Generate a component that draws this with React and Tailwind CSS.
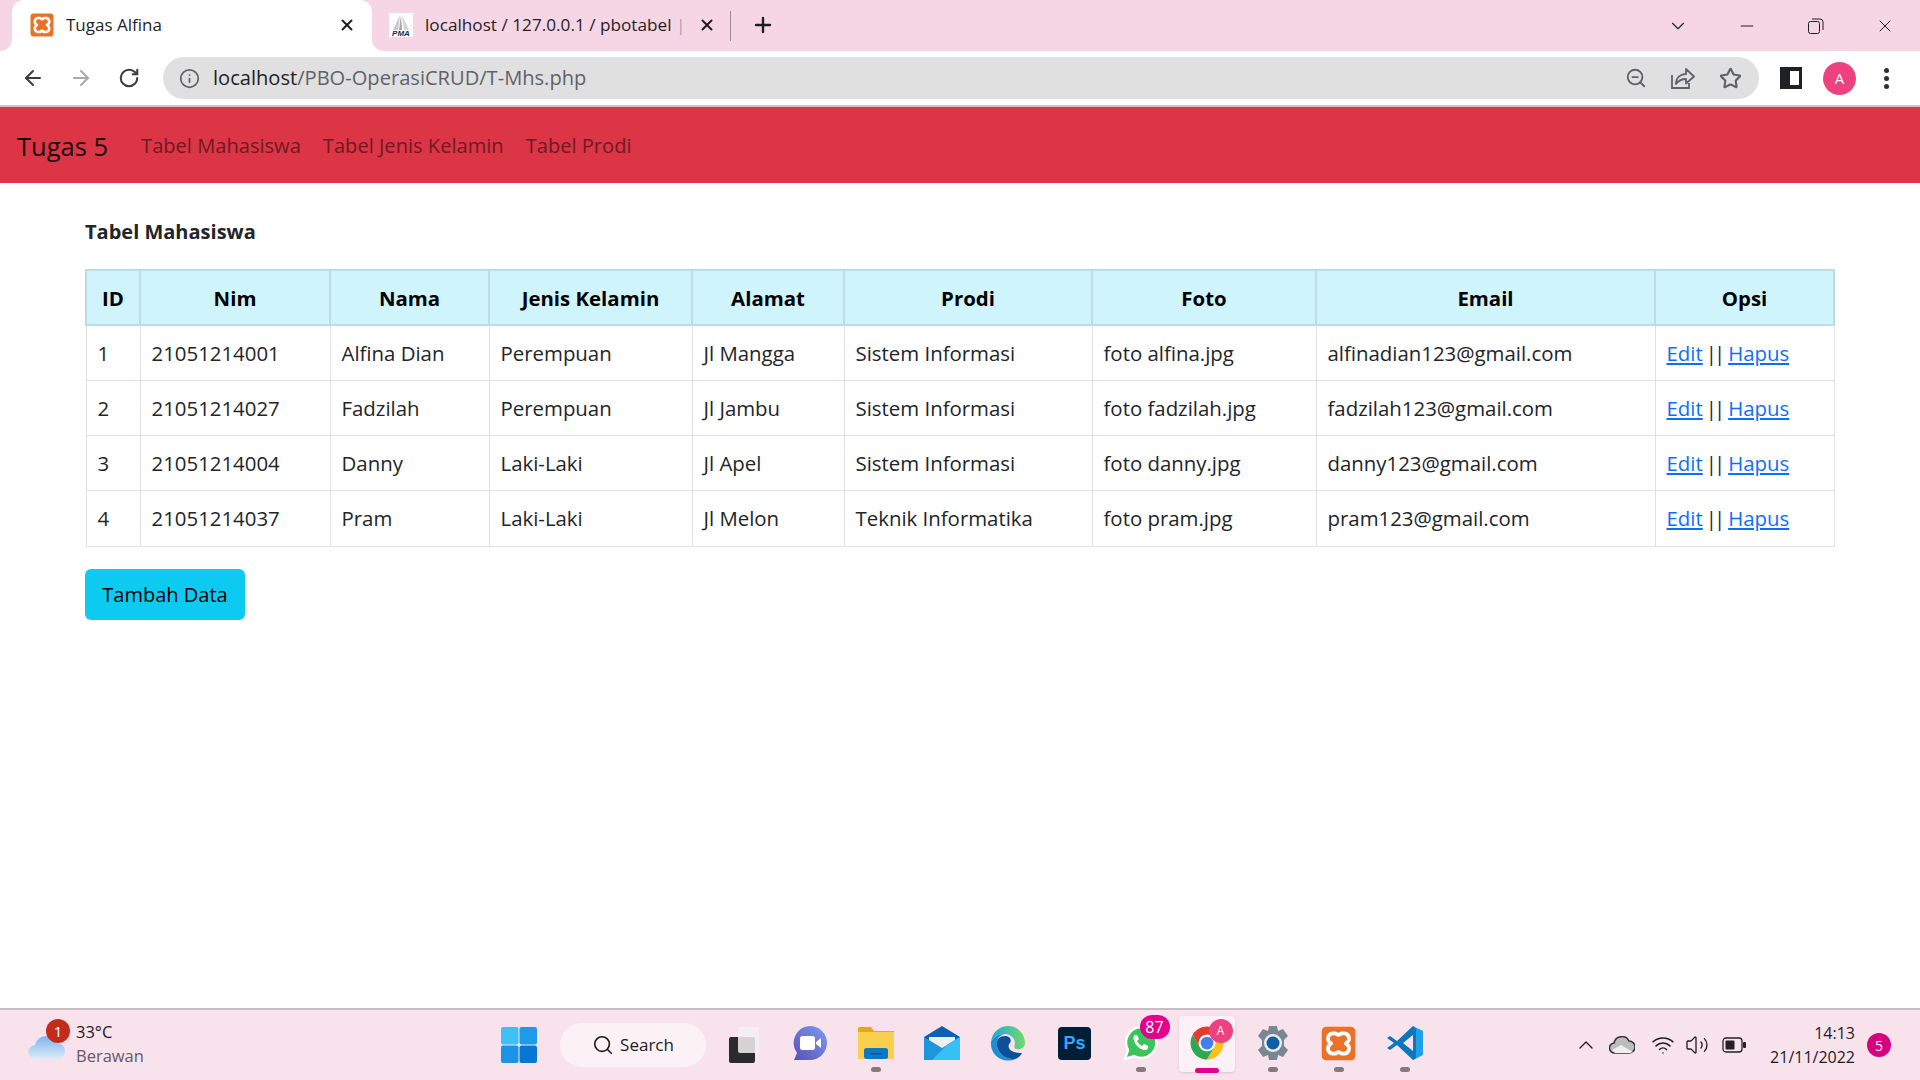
import { ArrowLeft, ArrowRight, RotateCw, Info, ZoomOut, Star, X, Plus, ChevronDown, Minus, Search, ChevronUp, Wifi, Volume2 } from 'lucide-react';

const mahasiswa = [
  ['1', '21051214001', 'Alfina Dian', 'Perempuan', 'Jl Mangga', 'Sistem Informasi', 'foto alfina.jpg', 'alfinadian123@gmail.com'],
  ['2', '21051214027', 'Fadzilah', 'Perempuan', 'Jl Jambu', 'Sistem Informasi', 'foto fadzilah.jpg', 'fadzilah123@gmail.com'],
  ['3', '21051214004', 'Danny', 'Laki-Laki', 'Jl Apel', 'Sistem Informasi', 'foto danny.jpg', 'danny123@gmail.com'],
  ['4', '21051214037', 'Pram', 'Laki-Laki', 'Jl Melon', 'Teknik Informatika', 'foto pram.jpg', 'pram123@gmail.com'],
];

const columns = [
  ['ID', 'w-[54px]'],
  ['Nim', 'w-[190px]'],
  ['Nama', 'w-[159px]'],
  ['Jenis Kelamin', 'w-[203px]'],
  ['Alamat', 'w-[152px]'],
  ['Prodi', 'w-[248px]'],
  ['Foto', 'w-[224px]'],
  ['Email', 'w-[339px]'],
  ['Opsi', 'w-[179px]'],
];

function Xampp({ size = 24 }) {
  return (
    <svg width={size} height={size} viewBox="0 0 24 24">
      <rect x="0.5" y="0.5" width="23" height="23" rx="3" fill="#ea7125" />
      <path d="M8 5H10Q12 7 14 5H16A3.5 3.5 0 0 1 17.5 11.5L17 12L17.5 12.5A3.5 3.5 0 0 1 16 19H14Q12 17 10 19H8A3.5 3.5 0 0 1 6.5 12.5L7 12L6.5 11.5A3.5 3.5 0 0 1 8 5Z" fill="none" stroke="#fff" strokeWidth="2.6" strokeLinejoin="round" />
    </svg>
  );
}

function Chrome({ size = 36 }) {
  return (
    <svg width={size} height={size} viewBox="0 0 48 48">
      <path d="M4.95 13A22 22 0 0 1 43.05 13H24A11 11 0 0 0 14.47 29.5Z" fill="#e33b2e" />
      <path d="M43.05 13A22 22 0 0 1 24 46L33.53 29.5A11 11 0 0 0 24 13Z" fill="#fbc116" />
      <path d="M24 46A22 22 0 0 1 4.95 13L14.47 29.5A11 11 0 0 0 33.53 29.5Z" fill="#2fa84f" />
      <circle cx="24" cy="24" r="11" fill="#fff" />
      <circle cx="24" cy="24" r="8.5" fill="#3f7ff0" />
    </svg>
  );
}

function TaskIcon({ children, running, active }) {
  return (
    <div className="relative flex h-full w-[66.1px] items-center justify-center pb-[4px]">
      {active && <span className="absolute left-[5px] top-0 h-[56px] w-[56px] rounded-[4px] bg-[#fdf0f6] shadow-sm" />}
      <span className="relative flex">{children}</span>
      {running && <span className="absolute bottom-[2px] h-[5px] w-[10px] rounded-full bg-[#85797f]" />}
      {active && <span className="absolute bottom-[1px] h-[5px] w-[24px] rounded-full bg-[#e3008c]" />}
    </div>
  );
}

function Taskbar() {
  return (
    <div className="relative flex h-[72px] shrink-0 items-center border-t-2 border-[#c9bcc2] bg-[#f8e2ec] text-[#1c1c1c]">
      <div className="relative ml-[28px] flex w-[472px] items-center gap-[2px]">
        <svg width="38" height="28" viewBox="0 0 38 28" className="mt-[3px]">
          <defs>
            <linearGradient id="cloud" x1="0" y1="0" x2="0" y2="1">
              <stop offset="0" stopColor="#7fb4ec" />
              <stop offset="1" stopColor="#dcebfa" />
            </linearGradient>
          </defs>
          <path d="M8 26a7 7 0 0 1-1-14 11 11 0 0 1 21-2 8 8 0 0 1 2 16z" fill="url(#cloud)" />
        </svg>
        <span className="absolute left-[18px] top-[-3px] flex h-[24px] w-[24px] items-center justify-center rounded-full bg-[#c42b1c] text-[15px] text-white">1</span>
        <div className="ml-[8px] mt-[-2px] flex flex-col font-['Open_Sans',sans-serif] text-[16.5px] leading-[24px]">
          <span>33°C</span>
          <span className="text-[#655a60]">Berawan</span>
        </div>
      </div>
      <div className="flex h-[58px] items-center">
        <div className="flex w-[38px] items-center justify-center">
          <svg width="36" height="36" viewBox="0 0 36 36">
            <rect x="0" y="0" width="17.5" height="17.5" rx="2" fill="#3cc0f5" />
            <rect x="18.5" y="0" width="17.5" height="17.5" rx="2" fill="#1c9be8" />
            <rect x="0" y="18.5" width="17.5" height="17.5" rx="2" fill="#1a94e4" />
            <rect x="18.5" y="18.5" width="17.5" height="17.5" rx="2" fill="#0478d4" />
          </svg>
        </div>
        <div className="ml-[22px] flex h-[44px] w-[146px] items-center justify-center gap-[6px] rounded-full bg-[#fcf2f6] font-['Open_Sans',sans-serif] text-[17px]">
          <Search size={22} strokeWidth={1.8} />
          <span>Search</span>
        </div>
        <div className="ml-[23px] flex w-[30px] items-center justify-center">
          <svg width="30" height="36" viewBox="0 0 30 36">
            <rect x="0" y="10" width="26" height="26" rx="2" fill="#2b2b2b" />
            <rect x="9" y="0" width="21" height="26" rx="2" fill="#f4f0f2" fillOpacity="0.85" />
          </svg>
        </div>
        <div className="ml-[18px] flex h-full items-center">
          <TaskIcon>
            <svg width="36" height="36" viewBox="0 0 36 36">
              <defs>
                <linearGradient id="meet" x1="0" y1="1" x2="1" y2="0">
                  <stop offset="0" stopColor="#5a4fb8" />
                  <stop offset="1" stopColor="#7c9ef0" />
                </linearGradient>
              </defs>
              <path d="M18 1a17 17 0 0 1 0 34H2l3-7A17 17 0 0 1 18 1z" fill="url(#meet)" />
              <rect x="8" y="11" width="15" height="14" rx="2.5" fill="#fff" />
              <path d="M24 17l5-4v10l-5-4z" fill="#fff" />
            </svg>
          </TaskIcon>
          <TaskIcon running>
            <svg width="36" height="32" viewBox="0 0 36 32">
              <path d="M0 2a2 2 0 0 1 2-2h11l3 4h20v28H0z" fill="#e9a80f" />
              <rect x="0" y="5" width="36" height="27" fill="#fbcf4e" />
              <rect x="6" y="21" width="24" height="11" rx="2.5" fill="#0f78c4" />
              <rect x="12" y="26" width="12" height="1.5" fill="#0a5a9c" />
            </svg>
          </TaskIcon>
          <TaskIcon>
            <svg width="36" height="34" viewBox="0 0 36 34">
              <path d="M18 0L36 11V16L18 26 0 16V11Z" fill="#0f5fb0" />
              <path d="M5 11H31V20L18 27 5 20Z" fill="#efefef" />
              <path d="M0 11L18 22 36 11V34H0Z" fill="#1f96dc" />
              <path d="M36 11V34H8L24 18Z" fill="#36c0f4" />
            </svg>
          </TaskIcon>
          <TaskIcon>
            <svg width="36" height="36" viewBox="0 0 36 36">
              <defs>
                <linearGradient id="edge" x1="0" y1="0" x2="1" y2="0">
                  <stop offset="0" stopColor="#1fa6dd" />
                  <stop offset="1" stopColor="#6fdc6a" />
                </linearGradient>
              </defs>
              <path d="M1 17C2 7 10 1 18 1C28 1 35 9 35 18C35 23 30 25 26 24C23 23 25 20 25 18C25 13 20 9 15 9C8 9 3 12 1 17Z" fill="url(#edge)" />
              <path d="M1 17C3 12 8 9 15 9C9 10 6 15 7 21C8 28 15 34 23 34C27 34 30 32 32 28C29 34 23 35.5 18 35.5C8 35.5 0 27 1 17Z" fill="#1b8fd6" />
              <path d="M7 21C6 15 9 11 15 11C20 11 22 15 20 18C17 21 19 26 24 27C27 28 30 28 32 28C30 32 27 34 23 34C15 34 8 28 7 21Z" fill="#0f4f9a" />
            </svg>
          </TaskIcon>
          <TaskIcon>
            <div className="flex h-[33px] w-[33px] items-center justify-center rounded bg-[#001e36] font-['Liberation_Sans',sans-serif] text-[18px] font-bold text-[#31a8ff]">Ps</div>
          </TaskIcon>
          <TaskIcon running>
            <svg width="36" height="38" viewBox="0 0 36 38">
              <path d="M18 3a15.5 15.5 0 0 1 0 31 15 15 0 0 1-7-2L2 35l3-9A15.500 15.500 0 0 1 18 3z" fill="#3cc35c" stroke="#fff" strokeWidth="2.5" />
              <path d="M12 11c-2 1-2 4 0 8 3 5 7 7 10 7 2 0 4-2 3-4l-4-2-2 2c-2-1-4-3-5-5l2-2-2-4z" fill="#fff" />
            </svg>
            <span className="absolute left-[17px] top-[-9px] flex h-[24px] w-[30px] items-center justify-center rounded-full bg-[#e3008c] font-['Open_Sans',sans-serif] text-[16px] text-white">87</span>
          </TaskIcon>
          <TaskIcon active>
            <Chrome />
            <span className="absolute left-[20px] top-[-6px] flex h-[24px] w-[24px] items-center justify-center rounded-full bg-[#ee4180] font-['Open_Sans',sans-serif] text-[12px] text-white">A</span>
          </TaskIcon>
          <TaskIcon running>
            <svg width="36" height="36" viewBox="0 0 36 36">
              <path d="M14 1h8l1 5 5-2 5 7-4 4 0 6 4 4-5 7-5-2-1 5h-8l-1-5-5 2-5-7 4-4v-6L3 11l5-7 5 2z" fill="#7a8792" />
              <circle cx="18" cy="18" r="9" fill="#e9eef2" />
              <circle cx="18" cy="18" r="6.5" fill="#0f5ea8" />
            </svg>
          </TaskIcon>
          <TaskIcon running>
            <Xampp size={35} />
          </TaskIcon>
          <TaskIcon running>
            <svg width="36" height="36" viewBox="0 0 36 36">
              <path d="M26 1l10 5v24l-10 5z" fill="#1fa0e8" />
              <path d="M26 1L10 16 3 11 0 13l7 5-7 5 3 2 7-5 16 15 3-2V4z" fill="#0a76bd" />
              <path d="M26 10v16l-10-8z" fill="#f8e2ec" />
            </svg>
          </TaskIcon>
        </div>
      </div>
      <div className="ml-auto flex items-center pr-[29px]">
        <ChevronUp size={24} strokeWidth={1.3} className="mr-[11px]" />
        <svg width="26" height="18" viewBox="0 0 26 18" className="mr-[16px]">
          <path d="M6 17a5 5 0 0 1-1-10 8 8 0 0 1 15-2 6 6 0 0 1 0 12z" fill="#bdbdbd" stroke="#333" strokeWidth="1.5" />
          <path d="M3 14l9-5 12 7-3 1H6z" fill="#f2eef0" />
        </svg>
        <Wifi size={24} strokeWidth={1.5} className="mr-[10px]" />
        <Volume2 size={24} strokeWidth={1.3} className="mr-[13px]" />
        <svg width="24" height="16" viewBox="0 0 24 16" className="mr-[24px]">
          <rect x="1" y="1" width="19" height="14" rx="3" fill="none" stroke="#222" strokeWidth="1.3" />
          <rect x="3.5" y="3.5" width="9" height="9" rx="1" fill="#222" />
          <rect x="21" y="5" width="3" height="6" rx="1" fill="#222" />
        </svg>
        <div className="flex flex-col items-end font-['Open_Sans',sans-serif] text-[16px] leading-[24px]">
          <span>14:13</span>
          <span>21/11/2022</span>
        </div>
        <span className="ml-[12px] flex h-[24px] w-[24px] items-center justify-center rounded-full bg-[#d4047f] font-['Open_Sans',sans-serif] text-[14px] text-white">5</span>
      </div>
    </div>
  );
}

export default function App() {
  return (
    <div className="flex h-screen flex-col overflow-hidden bg-white font-['Open_Sans',sans-serif]">
      {/* tab strip */}
      <div className="flex h-[51px] shrink-0 items-end bg-[#f6d5e5] pl-[12px] text-[#1f1f1f]">
        <div className="relative flex h-[51px] w-[360px] items-center rounded-t-[12px] bg-white pb-[2px] pl-[18px] pr-[16px]">
          <span className="absolute bottom-0 left-[-12px] h-[12px] w-[12px] bg-white">
            <span className="block h-full w-full rounded-br-[12px] bg-[#f6d5e5]" />
          </span>
          <span className="absolute bottom-0 right-[-12px] h-[12px] w-[12px] bg-white">
            <span className="block h-full w-full rounded-bl-[12px] bg-[#f6d5e5]" />
          </span>
          <Xampp size={24} />
          <span className="ml-[12px] flex-1 text-[17px]">Tugas Alfina</span>
          <X size={18} strokeWidth={2.6} />
        </div>
        <div className="flex h-[51px] w-[358px] items-center pb-[2px] pl-[17px] pr-[14px]">
          <svg width="24" height="24" viewBox="0 0 24 24" className="shrink-0">
            <rect width="24" height="24" fill="#fff" />
            <path d="M11 2L4 17h5z" fill="#c8c8c8" />
            <path d="M12 2l1 15h-3z" fill="#a8a8a8" />
            <path d="M13 2l7 15h-5z" fill="#d4d4d4" />
            <text x="12" y="23" textAnchor="middle" fontSize="8" fontWeight="700" fontStyle="italic" fill="#1c2a4a" fontFamily="Liberation Sans, sans-serif">PMA</text>
          </svg>
          <span className="ml-[12px] flex-1 overflow-hidden whitespace-nowrap text-[17.2px]">localhost / 127.0.0.1 / pbotabel <span className="text-[#a8a0c0]">|</span></span>
          <X size={18} strokeWidth={2.6} />
        </div>
        <div className="mb-[10px] h-[30px] w-px bg-[#9a8a92]" />
        <Plus size={24} strokeWidth={2.4} className="mb-[14px] ml-[20px]" />
        <div className="mb-[14px] ml-auto flex items-center pr-[25px]">
          <ChevronDown size={22} strokeWidth={1.2} />
          <Minus size={20} strokeWidth={1.2} className="ml-[48px]" />
          <svg width="16" height="16" viewBox="0 0 16 16" className="ml-[51px]" fill="none" stroke="#1f1f1f" strokeWidth="1">
            <rect x="0.5" y="3.5" width="11" height="12" rx="2" />
            <path d="M4 1h8a3 3 0 0 1 3 3v8" />
          </svg>
          <X size={20} strokeWidth={1.2} className="ml-[51px]" />
        </div>
      </div>
      {/* toolbar */}
      <div className="flex h-[54px] shrink-0 items-center bg-white pl-[21px] text-[#3c3c3c]">
        <ArrowLeft size={24} strokeWidth={2} />
        <ArrowRight size={24} strokeWidth={2} className="ml-[24px] text-[#a8a8a8]" />
        <RotateCw size={22} strokeWidth={2.2} className="ml-[25px]" />
        <div className="ml-[23px] flex h-[42px] w-[1596px] items-center rounded-full bg-[#e0e0e0] pl-[16px] pr-[17px] text-[#5f6368]">
          <Info size={21} strokeWidth={2} />
          <span className="ml-[13px] flex-1 text-[20.1px]">
            <span className="text-[#1f1f1f]">localhost</span>/PBO-OperasiCRUD/T-Mhs.php
          </span>
          <ZoomOut size={22} strokeWidth={2} />
          <svg width="24" height="22" viewBox="0 0 24 22" fill="none" stroke="currentColor" strokeWidth="1.8" className="ml-[24px]">
            <path d="M1 8v13h17v-5" />
            <path d="M5 17c0-7 5-10 10-10V2l8 7.5-8 7V12c-4 0-7 1-10 5z" strokeLinejoin="round" />
          </svg>
          <Star size={23} strokeWidth={2.2} className="ml-[24px]" />
        </div>
        <div className="ml-[21px] flex h-[22px] w-[22px] items-center justify-center bg-[#202124]">
          <div className="ml-[6px] h-[14px] w-[9px] bg-white" />
        </div>
        <div className="ml-[21px] flex h-[33px] w-[33px] items-center justify-center rounded-full bg-[#ee4180] text-[15px] text-white">A</div>
        <div className="ml-[28px] flex flex-col gap-[3px]">
          <span className="h-[5px] w-[5px] rounded-full bg-[#303030]" />
          <span className="h-[5px] w-[5px] rounded-full bg-[#303030]" />
          <span className="h-[5px] w-[5px] rounded-full bg-[#303030]" />
        </div>
      </div>
      {/* navbar */}
      <div className="flex h-[78px] shrink-0 items-center border-t-2 border-[#c6c6c6] bg-[#dc3545] pl-[17px] pt-[2px]">
        <span className="text-[25.5px] text-[#1b0a0c]">Tugas 5</span>
        <div className="ml-[33px] flex gap-[22px] text-[20.1px] text-[#6e1b23]">
          <span>Tabel Mahasiswa</span>
          <span>Tabel Jenis Kelamin</span>
          <span>Tabel Prodi</span>
        </div>
      </div>
      {/* content */}
      <div className="flex-1 px-[85px] pt-[34px]">
        <h5 className="text-[20px] font-bold leading-[30px] text-[#212529]">Tabel Mahasiswa</h5>
        <table className="mt-[22px] w-[1748px] table-fixed border-collapse text-[20.4px] text-[#212529]">
          <thead>
            <tr className="h-[55px] bg-[#cff4fc]">
              {columns.map(([name, width]) => (
                <th key={name} className={`${width} border-2 border-[#bddde4] pt-[1px] font-bold text-black`}>{name}</th>
              ))}
            </tr>
          </thead>
          <tbody>
            {mahasiswa.map((row) => (
              <tr key={row[0]} className="h-[55.25px]">
                {row.map((cell, i) => (
                  <td key={i} className="border border-[#dee2e6] pl-[11px]">{cell}</td>
                ))}
                <td className="whitespace-nowrap border border-[#dee2e6] pl-[11px]">
                  <a href="#" className="text-[#0d6efd] underline">Edit</a>
                  <span className="mx-[3px] tracking-[-3px]">||</span>
                  <a href="#" className="ml-[3px] text-[#0d6efd] underline">Hapus</a>
                </td>
              </tr>
            ))}
          </tbody>
        </table>
        <button className="mt-[22px] h-[51px] w-[160px] rounded-[6px] bg-[#0dcaf0] pt-[2px] text-[20px] text-black">Tambah Data</button>
      </div>
      <Taskbar />
    </div>
  );
}
